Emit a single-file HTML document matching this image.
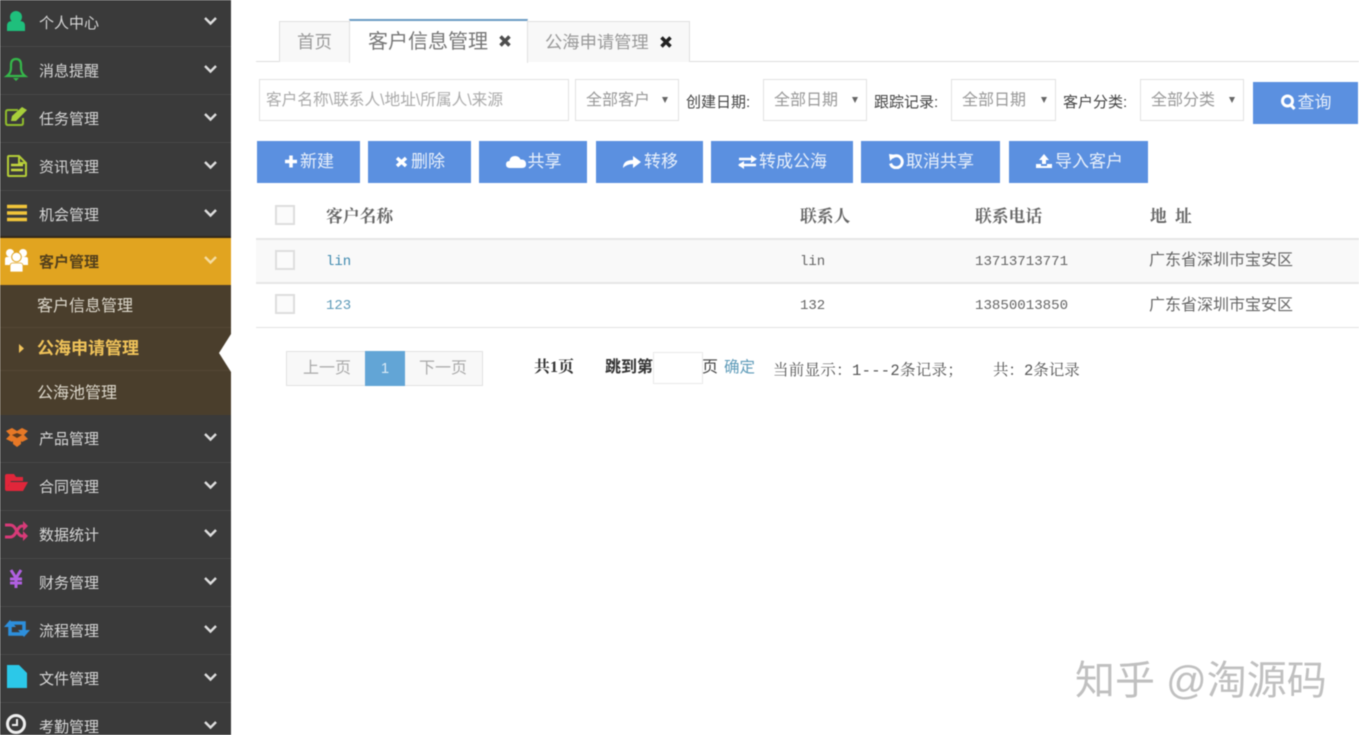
<!DOCTYPE html>
<html lang="zh"><head><meta charset="utf-8"><title>客户管理</title>
<style>
html,body{margin:0;padding:0;background:#fff}
body{width:1359px;height:735px;position:relative;overflow:hidden;font-family:"Liberation Sans","Noto Sans CJK SC",sans-serif;color:#555}
#wrap{position:absolute;left:0;top:0;width:1359px;height:735px;overflow:hidden;filter:blur(.5px)}
.a{position:absolute;white-space:nowrap}
#side{position:absolute;left:0;top:0;width:231px;height:735px;background:#3a3a3a;overflow:hidden}
.m{position:absolute;left:0;width:231px;height:47px;border-bottom:1px solid #474747;box-sizing:content-box}
.m span{position:absolute;left:39px;top:50%;margin-top:1px;transform:translateY(-50%);font-size:15px;line-height:20px;color:#d6d6d6;white-space:nowrap}
.m svg.c{position:absolute;left:203px;top:17px}
.m svg.i{position:absolute;left:0;top:0}
.sub{position:absolute;left:0;width:231px;height:43px;background:#4a3e2c;border-bottom:1px solid #544734;box-sizing:border-box}
.sub span{position:absolute;left:37px;top:10px;font-size:16px;line-height:20px;color:#ddd8cc;white-space:nowrap}
.tab{position:absolute;box-sizing:border-box;text-align:center;white-space:nowrap}
.sel{position:absolute;top:79px;height:42px;background:#fff;border:1px solid #e2e2e2;box-sizing:border-box;font-size:16px;color:#999;line-height:42px;padding-left:10px;white-space:nowrap}
.sel i{position:absolute;right:8px;top:17px;width:0;height:0;border-left:3.5px solid transparent;border-right:3.5px solid transparent;border-top:6px solid #666}
.lb{position:absolute;top:93px;font-size:15px;color:#444;white-space:nowrap;line-height:20px}
.b{position:absolute;top:141px;height:42px;background:#5b90e0;color:#e8f0fb;font-size:17px;line-height:42px;text-align:center;white-space:nowrap}
.b svg{vertical-align:-2px;margin-right:1px}
.cb{position:absolute;left:275px;width:20px;height:20px;border:2px solid #dedede;box-sizing:border-box;background:#fbfbfb}
.t{position:absolute;font-size:15px;line-height:20px;white-space:nowrap;color:#666}
.mono{font-family:"Liberation Mono","Noto Serif CJK SC",monospace;font-size:14px}
.h{font-family:"Liberation Serif","Noto Serif CJK SC",serif;font-weight:700;color:#666;font-size:16.800px}
.hl{position:absolute;left:256px;width:1103px;background:#e6e6e6}
</style></head><body>
<div id="wrap">

<div id="side">
<div class="m" style="top:-1px"><svg class="i" width="36" height="47"><circle cx="16" cy="18" r="6" fill="#1fbf7c"/><path d="M7 32v-5q0-5 5-5h8q5 0 5 5v5z" fill="#1fbf7c"/></svg><span>个人中心</span><svg class="c" width="15" height="10"><path d="M2 2l5.500 5.500L13 2" stroke="#ddd" stroke-width="2.400" fill="none"/></svg></div>
<div class="m" style="top:47px"><svg class="i" width="36" height="47"><path d="M7 29q4-3 4-8v-3q0-6 5-6t5 6v3q0 5 4 8z" fill="none" stroke="#35b84a" stroke-width="2.200"/><path d="M13 31h6l-3 3z" fill="#35b84a"/></svg><span>消息提醒</span><svg class="c" width="15" height="10"><path d="M2 2l5.500 5.500L13 2" stroke="#ddd" stroke-width="2.400" fill="none"/></svg></div>
<div class="m" style="top:95px"><svg class="i" width="36" height="47"><path d="M18 15H8q-2 0-2 2v11q0 2 2 2h13q2 0 2-2v-5" fill="none" stroke="#8fbc2c" stroke-width="2"/><path d="M11 26l1-5 10-9 5 3-11 11z" fill="#a8cf3a"/></svg><span>任务管理</span><svg class="c" width="15" height="10"><path d="M2 2l5.500 5.500L13 2" stroke="#ddd" stroke-width="2.400" fill="none"/></svg></div>
<div class="m" style="top:143px"><svg class="i" width="36" height="47"><path d="M9 13h10l7 7v12q0 1-1 1H9q-1 0-1-1V14q0-1 1-1z" fill="none" stroke="#b4cc38" stroke-width="2"/><path d="M11 22h12M11 27h12" stroke="#c5d83e" stroke-width="2.500"/><path d="M19 13v7h7" fill="none" stroke="#b4cc38" stroke-width="2"/></svg><span>资讯管理</span><svg class="c" width="15" height="10"><path d="M2 2l5.500 5.500L13 2" stroke="#ddd" stroke-width="2.400" fill="none"/></svg></div>
<div class="m" style="top:191px"><svg class="i" width="36" height="47"><path d="M7 15.500h20M7 22h20M7 28.500h20" stroke="#f2c53a" stroke-width="3.500"/></svg><span>机会管理</span><svg class="c" width="15" height="10"><path d="M2 2l5.500 5.500L13 2" stroke="#ddd" stroke-width="2.400" fill="none"/></svg></div>

<div style="position:absolute;left:0;top:236px;width:231px;height:2px;background:#33281a"></div>
<div class="m" style="top:238px;height:47px;background:#e1a420;border:0"><svg class="i" width="36" height="47"><circle cx="10" cy="15" r="4" fill="#fff"/><circle cx="23" cy="15" r="4" fill="#fff"/><path d="M5 27v-6q0-2 2-2h19q2 0 2 2v6z" fill="#fff"/><circle cx="16.500" cy="19" r="4.800" fill="#fff" stroke="#e1a420"/><path d="M10 34v-6q0-3 3-3h7q3 0 3 3v6z" fill="#fff" stroke="#e1a420" stroke-width=".8"/></svg><span style="color:#54401c;font-weight:700">客户管理</span><svg class="c" width="15" height="10"><path d="M2 2l5.500 5.500L13 2" stroke="#f4dca0" stroke-width="2.400" fill="none"/></svg></div>
<div class="sub" style="top:285px"><span style="top:12px">客户信息管理</span></div>
<div class="sub" style="top:328px"><span style="top:11px;font-size:17px;color:#f0c35a;font-weight:700">公海申请管理</span><svg style="position:absolute;left:19px;top:16px" width="6" height="9"><path d="M0 0l5 4.500L0 9z" fill="#f2c45c"/></svg></div>
<div class="sub" style="top:371px;height:44px;border:0"><span style="top:12.500px">公海池管理</span></div>
<svg style="position:absolute;left:219px;top:334px" width="12" height="38"><path d="M12 0L0 19l12 19z" fill="#fff"/></svg>

<div class="m" style="top:415px"><svg class="i" width="36" height="47"><path d="M6 16l6-3 5 3 5-3 6 3-4 4 4 4-6 3-1-1v3l-4 3-4-3v-3l-1 1-6-3 4-4z" fill="#e67826"/><path d="M12 20l5-2 5 2-5 3z" fill="#5a3a20"/></svg><span>产品管理</span><svg class="c" width="15" height="10"><path d="M2 2l5.500 5.500L13 2" stroke="#ddd" stroke-width="2.400" fill="none"/></svg></div>
<div class="m" style="top:463px"><svg class="i" width="36" height="47"><path d="M5 13q0-2 2-2h7l2 3h7v4H11l-3 5v5H7q-2 0-2-2z" fill="#e0263a"/><path d="M10 19h18l-5 9H6z" fill="#e0263a"/></svg><span>合同管理</span><svg class="c" width="15" height="10"><path d="M2 2l5.500 5.500L13 2" stroke="#ddd" stroke-width="2.400" fill="none"/></svg></div>
<div class="m" style="top:511px"><svg class="i" width="36" height="47"><path d="M5 14h5q3 0 5 3l3 5q2 3 4 3h2M5 26h5q3 0 5-3l3-5q2-3 4-3h2" fill="none" stroke="#d83a78" stroke-width="3"/><path d="M23 10l5 5-5 5zM23 20l5 5-5 5z" fill="#d83a78"/></svg><span>数据统计</span><svg class="c" width="15" height="10"><path d="M2 2l5.500 5.500L13 2" stroke="#ddd" stroke-width="2.400" fill="none"/></svg></div>
<div class="m" style="top:559px"><svg class="i" width="36" height="47"><path d="M11 11l5 8 5-8M16 18v11M10 20h12M10 24h12" fill="none" stroke="#b060e0" stroke-width="3"/></svg><span>财务管理</span><svg class="c" width="15" height="10"><path d="M2 2l5.500 5.500L13 2" stroke="#ddd" stroke-width="2.400" fill="none"/></svg></div>
<div class="m" style="top:607px"><svg class="i" width="36" height="47"><path d="M11 16h13v9M23 27H10v-8" fill="none" stroke="#2d8fdc" stroke-width="3.500"/><path d="M10 13l-6 7h12zM24 30l6-7H18z" fill="#2d8fdc"/></svg><span>流程管理</span><svg class="c" width="15" height="10"><path d="M2 2l5.500 5.500L13 2" stroke="#ddd" stroke-width="2.400" fill="none"/></svg></div>
<div class="m" style="top:655px"><svg class="i" width="36" height="47"><path d="M7 10h12l8 8v15H7z" fill="#2cc8e8"/></svg><span>文件管理</span><svg class="c" width="15" height="10"><path d="M2 2l5.500 5.500L13 2" stroke="#ddd" stroke-width="2.400" fill="none"/></svg></div>
<div class="m" style="top:703px"><svg class="i" width="36" height="47"><circle cx="16" cy="21" r="8.500" fill="none" stroke="#eee" stroke-width="3"/><path d="M17 16v6h-5" fill="none" stroke="#eee" stroke-width="2"/></svg><span>考勤管理</span><svg class="c" width="15" height="10"><path d="M2 2l5.500 5.500L13 2" stroke="#ddd" stroke-width="2.400" fill="none"/></svg></div>
</div>

<!-- tabs -->
<div class="a" style="left:256px;top:61px;width:1103px;height:1px;background:#dedede"></div>
<div class="tab" style="left:279px;top:21px;width:71px;height:41px;background:#f8f8f8;border:1px solid #e0e0e0;border-bottom:0;font-size:17.500px;line-height:41px;color:#999">首页</div>
<div class="tab" style="left:349px;top:19px;width:179px;height:44px;background:#fff;border:1px solid #e0e0e0;border-top:2px solid #6a9bc4;border-bottom:0;font-size:20px;line-height:43px;color:#777;text-align:left;padding-left:18px">客户信息管理</div>
<svg class="a" style="left:498px;top:34px" width="14" height="14"><path d="M2.500 2.500l9 9M11.500 2.500l-9 9" stroke="#4d4d4d" stroke-width="3.500"/></svg>
<div class="tab" style="left:527px;top:21px;width:163px;height:41px;background:#f8f8f8;border:1px solid #e0e0e0;border-bottom:0;font-size:17.300px;line-height:41px;color:#999;text-align:left;padding-left:17px">公海申请管理</div>
<svg class="a" style="left:659px;top:35px" width="14" height="14"><path d="M2.500 2.500l9 9M11.500 2.500l-9 9" stroke="#222" stroke-width="3.500"/></svg>

<!-- filters -->
<div class="sel" style="left:259px;width:310px;font-size:15.700px;color:#aaa;padding-left:6px">客户名称\联系人\地址\所属人\来源</div>
<div class="sel" style="left:575px;width:104px">全部客户<i style="right:10px"></i></div>
<div class="lb" style="left:686px">创建日期:</div>
<div class="sel" style="left:763px;width:104px">全部日期<i></i></div>
<div class="lb" style="left:874px">跟踪记录:</div>
<div class="sel" style="left:951px;width:105px">全部日期<i></i></div>
<div class="lb" style="left:1063px">客户分类:</div>
<div class="sel" style="left:1140px;width:104px">全部分类<i></i></div>
<div class="b" style="left:1253px;top:82px;width:105px"><svg width="17" height="16"><circle cx="7.500" cy="7" r="5" fill="none" stroke="#fff" stroke-width="3"/><path d="M10.500 10.500l4 4.500" stroke="#fff" stroke-width="3"/></svg>查询</div>

<!-- buttons -->
<div class="b" style="left:257px;width:103px"><svg width="16" height="15"><path d="M8 1.500v12M2 7.500h12" stroke="#fff" stroke-width="3.500"/></svg>新建</div>
<div class="b" style="left:368px;width:103px"><svg width="16" height="14"><path d="M3 3l9 8M12 3l-9 8" stroke="#fff" stroke-width="3.500"/></svg>删除</div>
<div class="b" style="left:479px;width:108px"><svg width="22" height="15"><path d="M5 14q-4 0-4-3.500T4.500 7Q5 2 10 2q4 0 5.500 3.500 5-.5 5.500 4T17 14z" fill="#fff"/></svg>共享</div>
<div class="b" style="left:596px;width:107px"><svg width="22" height="16"><path d="M2 15q0-8 10-8V3l8 6-8 6v-4q-6 0-10 4z" fill="#fff"/></svg>转移</div>
<div class="b" style="left:711px;width:142px"><svg width="21" height="15"><path d="M2 5h13M2 11h17" stroke="#fff" stroke-width="2.500"/><path d="M14 1l6 4-6 4zM7 7l-6 4 6 4z" fill="#fff"/></svg>转成公海</div>
<div class="b" style="left:861px;width:139px"><svg width="18" height="16"><path d="M5 4.500a6 6 0 1 1-1.500 6" fill="none" stroke="#fff" stroke-width="3"/><path d="M2 1l7 1-6 6z" fill="#fff"/></svg>取消共享</div>
<div class="b" style="left:1009px;width:139px"><svg width="20" height="16"><path d="M10 1l5 6h-3v4H8V7H5z" fill="#fff"/><path d="M2 11h5v2h6v-2h5v4H2z" fill="#fff"/></svg>导入客户</div>

<!-- table -->
<div class="a" style="left:256px;top:239px;width:1103px;height:44px;background:#f9f9f9"></div>
<div class="hl" style="top:238px;height:2px"></div>
<div class="hl" style="top:282px;height:2px"></div>
<div class="hl" style="top:327px;height:1px;background:#e2e2e2"></div>
<div class="cb" style="top:205px"></div>
<div class="cb" style="top:250px"></div>
<div class="cb" style="top:294px"></div>
<div class="t h" style="left:326px;top:207px">客户名称</div>
<div class="t h" style="left:800px;top:207px">联系人</div>
<div class="t h" style="left:975px;top:207px">联系电话</div>
<div class="t h" style="left:1150px;top:207px;word-spacing:4px">地 址</div>
<div class="t mono" style="left:326px;top:252px;color:#428bb0">lin</div>
<div class="t mono" style="left:800px;top:252px">lin</div>
<div class="t mono" style="left:975px;top:252px;font-size:14.100px">13713713771</div>
<div class="t" style="left:1149px;top:251px;font-size:16px;color:#666">广东省深圳市宝安区</div>
<div class="t mono" style="left:326px;top:296px;color:#5d9ab8">123</div>
<div class="t mono" style="left:800px;top:296px">132</div>
<div class="t mono" style="left:975px;top:296px;font-size:14.100px">13850013850</div>
<div class="t" style="left:1149px;top:296px;font-size:16px;color:#666">广东省深圳市宝安区</div>

<!-- pagination -->
<div class="a" style="left:286px;top:351px;width:197px;height:35px;background:#f8f8f8;border:1px solid #e2e2e2;box-sizing:border-box"></div>
<div class="a" style="left:365px;top:351px;width:40px;height:35px;background:#62a5d6;color:#d8eaf6;font-size:15px;line-height:35px;text-align:center">1</div>
<div class="t" style="left:303px;top:359px;font-size:16px;color:#aaa">上一页</div>
<div class="t" style="left:419px;top:359px;font-size:16px;color:#aaa">下一页</div>
<div class="t" style="left:534px;top:358px;font-size:16px;color:#333;font-weight:700;font-family:'Liberation Serif','Noto Serif CJK SC',serif">共1页</div>
<div class="t" style="left:605px;top:358px;font-size:16px;color:#333;font-weight:700">跳到第</div>
<div class="a" style="left:653px;top:352px;width:50px;height:32px;border:1px solid #eaeaea;box-sizing:border-box;background:#fff"></div>
<div class="t" style="left:702px;top:358px;font-size:16px;color:#444">页</div>
<div class="t" style="left:724px;top:358px;color:#5d9ab8;font-size:15.500px">确定</div>
<div class="t mono" style="left:773px;top:361px;color:#555;font-size:15.500px;letter-spacing:.3px">当前显示：1---2条记录；</div>
<div class="t mono" style="left:993px;top:361px;color:#555;font-size:15.500px">共：2条记录</div>

<!-- watermark -->
<div class="a" style="left:1075px;top:658px;font-size:40px;line-height:46px;color:#c0c0c0;font-family:'Liberation Sans','Noto Sans CJK SC',sans-serif">知乎 @淘源码</div>
</div>
</body></html>
